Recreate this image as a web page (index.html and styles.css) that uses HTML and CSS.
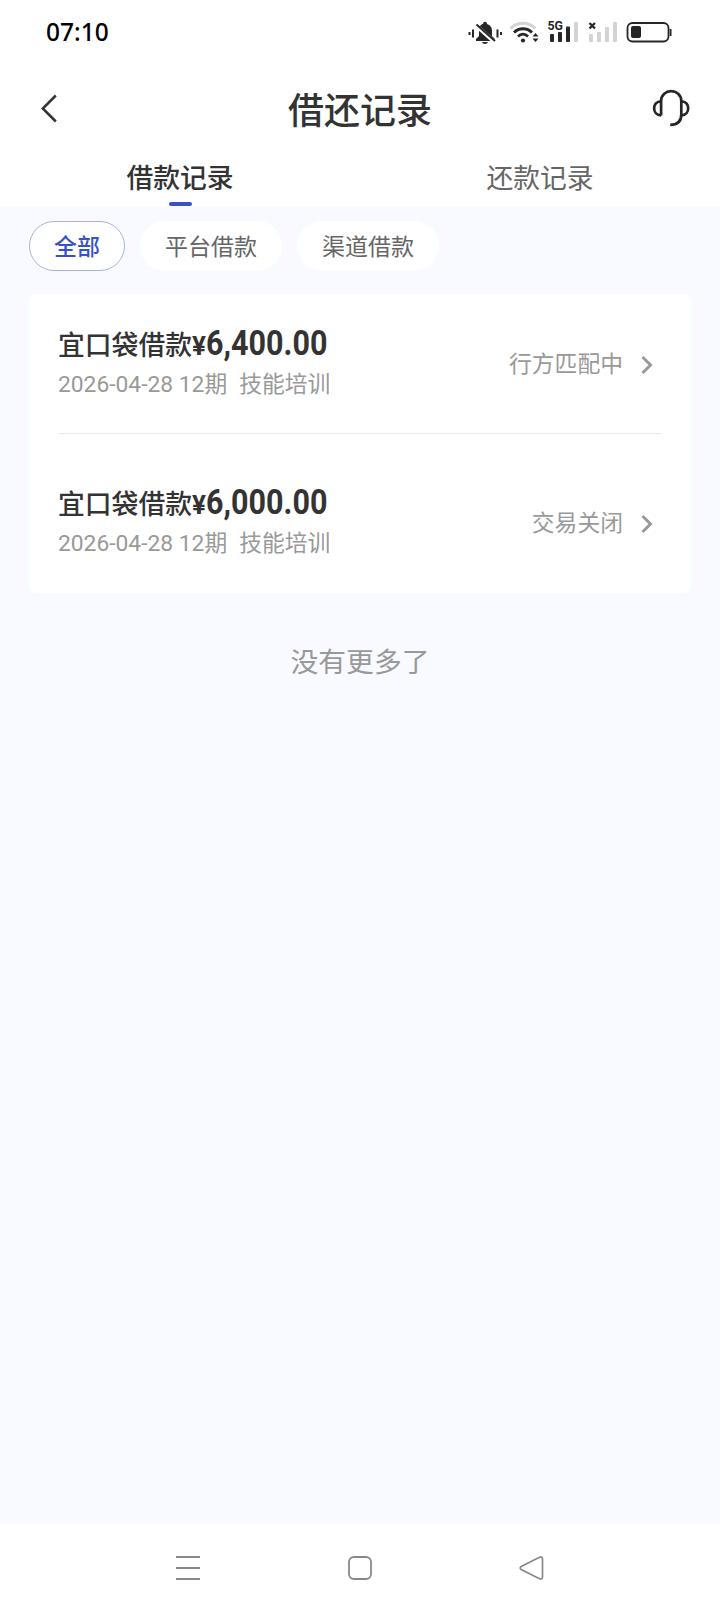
FILE: index.html
```html
<!DOCTYPE html>
<html lang="zh-CN">
<head>
<meta charset="utf-8">
<title>借还记录</title>
<link rel="stylesheet" href="styles.css">
</head>
<body>
<div class="screen">
  <div class="status">
    <span class="clock">07:10</span>
    <svg class="indicators" width="206" height="30" viewBox="0 0 206 30">
      <!-- muted bell -->
      <g fill="#262626">
        <path d="M7 23v-2l3-3V12c0-4 2.500-6 4-6 0-3 4-3 4 0 3 1 5 3 5 7v5l3 3v2z"/>
        <path d="M13 24h6c-1 2.500-5 2.500-6 0z"/>
        <path d="M5.500 6L26 24.500" stroke="#fff" stroke-width="4"/>
        <path d="M7.500 6.500L26 23" stroke="#262626" stroke-width="2"/>
        <path d="M3 11.500h2v8H3zM27.500 11.500h2v8h-2zM-.5 14h2v3h-2zM31 14h2v3h-2z"/>
      </g>
      <!-- wifi -->
      <g fill="none" stroke-width="2.800">
        <path d="M41.500 10.500C48.500 3.500 59.500 3.500 66.500 10.500" stroke="#d3d3d3"/>
        <path d="M45 14.500C50 9.500 58 9.500 63 14.500M49 18.500C52 15.500 56 15.500 59 18.500" stroke="#262626"/>
      </g>
      <circle cx="54" cy="22.500" r="2.100" fill="#262626"/>
      <path d="M66.500 15l3 3.500h-6zM66.500 24l3-3.500h-6z" fill="#262626"/>
      <!-- first sim -->
      <text class="net" x="78.500" y="12" textLength="15.500" lengthAdjust="spacingAndGlyphs">5G</text>
      <g fill="#262626"><rect x="81" y="16" width="4" height="8" rx="1"/><rect x="89" y="14" width="4" height="10" rx="1"/><rect x="97" y="8.500" width="4" height="15.500" rx="1"/></g>
      <rect x="105" y="4" width="4" height="20" rx="1" fill="#d3d3d3"/>
      <!-- second sim -->
      <path d="M120.500 5l5.500 5.500M126 5l-5.500 5.500" stroke="#262626" stroke-width="2.300"/>
      <g fill="#d3d3d3"><rect x="120" y="16" width="4" height="8" rx="1"/><rect x="128" y="14" width="4" height="10" rx="1"/><rect x="136" y="9" width="4" height="15" rx="1"/><rect x="144" y="4" width="4" height="20" rx="1"/></g>
      <!-- battery -->
      <rect x="158.500" y="5" width="41" height="18.500" rx="5" fill="none" stroke="#262626" stroke-width="1.800"/>
      <rect x="162" y="8" width="10" height="12" rx="2" fill="#262626"/>
      <path d="M201.600 11v7" stroke="#262626" stroke-width="1.800"/>
    </svg>
  </div>
  <header class="header">
    <svg class="back" width="20" height="32" viewBox="0 0 20 32"><path d="M15.800 3.500L2.800 16.500l13 13" fill="none" stroke="#333" stroke-width="2.500"/></svg>
    <h1 class="title">借还记录</h1>
    <svg class="service" width="38" height="38" viewBox="0 0 38 38"><g fill="none" stroke="#262626" stroke-width="2.700"><path d="M9.100 26.500V12.300C9.100-1.200 29.300-1.200 29.300 12.300V25.500Q29.300 35.800 18.200 35.800"/><path d="M9.100 12.300C-.2 12.300-.2 26.300 9.100 26.300M29.300 12.300C38.500 12.300 38.500 26.300 29.300 26.300"/></g></svg>
  </header>
  <nav class="tabs">
    <div class="tab tab-active">借款记录</div>
    <div class="tab">还款记录</div>
  </nav>
  <main class="content">
    <div class="chips">
      <div class="chip chip-active">全部</div>
      <div class="chip">平台借款</div>
      <div class="chip">渠道借款</div>
    </div>
    <section class="card">
      <article class="record">
        <div class="info">
          <div class="name">宜口袋借款<span class="yen">¥</span><span class="amount">6,400.00</span></div>
          <div class="meta">2026-04-28 12期<span class="purpose">技能培训</span></div>
        </div>
        <div class="state">行方匹配中<svg class="arrow" width="12" height="20" viewBox="0 0 12 20"><path d="M1.500 2l8 8-8 8" fill="none" stroke="#999" stroke-width="3"/></svg></div>
      </article>
      <article class="record">
        <div class="info">
          <div class="name">宜口袋借款<span class="yen">¥</span><span class="amount">6,000.00</span></div>
          <div class="meta">2026-04-28 12期<span class="purpose">技能培训</span></div>
        </div>
        <div class="state">交易关闭<svg class="arrow" width="12" height="20" viewBox="0 0 12 20"><path d="M1.500 2l8 8-8 8" fill="none" stroke="#999" stroke-width="3"/></svg></div>
      </article>
    </section>
    <p class="end">没有更多了</p>
  </main>
  <footer class="sysnav">
    <svg width="26" height="26" viewBox="0 0 26 26"><path d="M1 2h24M1 13h24M1 24h24" stroke="#888" stroke-width="2"/></svg>
    <svg width="26" height="26" viewBox="0 0 26 26"><rect x="2" y="2" width="22" height="22" rx="5" fill="none" stroke="#888" stroke-width="1.800"/></svg>
    <svg width="26" height="26" viewBox="0 0 26 26"><path d="M2.200 11.500L20.500 2.200Q23.500 1.200 23.500 4V22Q23.500 24.800 20.500 23.800L2.200 14.500Q.2 13 2.200 11.500z" fill="none" stroke="#888" stroke-width="1.700"/></svg>
  </footer>
</div>
</body>
</html>
```
FILE: styles.css
```css
* { box-sizing: border-box; }
body { margin: 0; background: #fff; color: #333; font-family: Roboto, "Noto Sans CJK SC", sans-serif; }
svg { display: block; flex: none; }
.screen { width: 720px; height: 1612px; display: flex; flex-direction: column; overflow: hidden; }
.status { height: 64px; flex: none; display: flex; align-items: center; justify-content: space-between; padding: 0 45px 0 46px; }
.clock { font: 500 24.5px/30px "Noto Sans", sans-serif; color: #000; }
.indicators { margin-top: 2px; overflow: visible; }
.net { font: 700 13.5px Roboto, sans-serif; fill: #262626; }
.header { height: 88px; flex: none; display: flex; align-items: center; justify-content: space-between; padding: 0 30px 0 40px; }
.back { margin-right: 8px; }
.title { margin: 0; padding-top: 7px; font-size: 36px; line-height: 52px; font-weight: 500; }
.tabs { height: 54px; flex: none; display: flex; }
.tab { flex: 1; display: flex; flex-direction: column; align-items: center; padding-top: 5px; font-size: 26.8px; line-height: 45px; color: #666; }
.tab-active { color: #333; font-weight: 500; }
.tab-active::after { content: ""; width: 23px; height: 4px; border-radius: 2px; background: #3851cb; }
.content { flex: 1; background: #f8faff; padding: 15px 29px 0; }
.chips { display: flex; gap: 15px; }
.chip { height: 50px; padding: 0 25px; border-radius: 25px; background: #fff; font-size: 23px; line-height: 53px; color: #666; }
.chip-active { padding: 0 24px; border: 1px solid #a9b3d9; line-height: 51px; color: #3851cb; font-weight: 500; }
.card { margin-top: 23px; height: 299px; padding: 0 29px; border-radius: 8px; background: #fff; }
.record { height: 139px; display: flex; justify-content: space-between; align-items: center; }
.record + .record { height: 160px; border-top: 1px solid #eaeaea; padding-top: 19px; }
.info { padding-top: 2px; }
.name { display: flex; align-items: baseline; height: 40px; margin-top: -2px; font-size: 26.8px; line-height: 36px; font-weight: 500; white-space: nowrap; }
.yen { width: 14px; font-size: 26px; font-weight: 700; }
/* condensed numerals */
.amount { width: 124px; font-size: 34.500px; font-weight: 700; transform: scaleX(.885); transform-origin: left; }
.meta { padding-top: 2px; font-size: 22.800px; line-height: 36px; color: #999; white-space: nowrap; }
.purpose { margin-left: 12px; }
.state { display: flex; align-items: center; padding-top: 2px; font-size: 22.800px; line-height: 36px; color: #999; }
.arrow { margin: 0 9px 0 18px; }
.end { margin: 49px 0 0; text-align: center; font-size: 27.800px; line-height: 42px; color: #999; }
.sysnav { height: 88px; flex: none; display: flex; align-items: center; justify-content: center; gap: 146px; }
```
